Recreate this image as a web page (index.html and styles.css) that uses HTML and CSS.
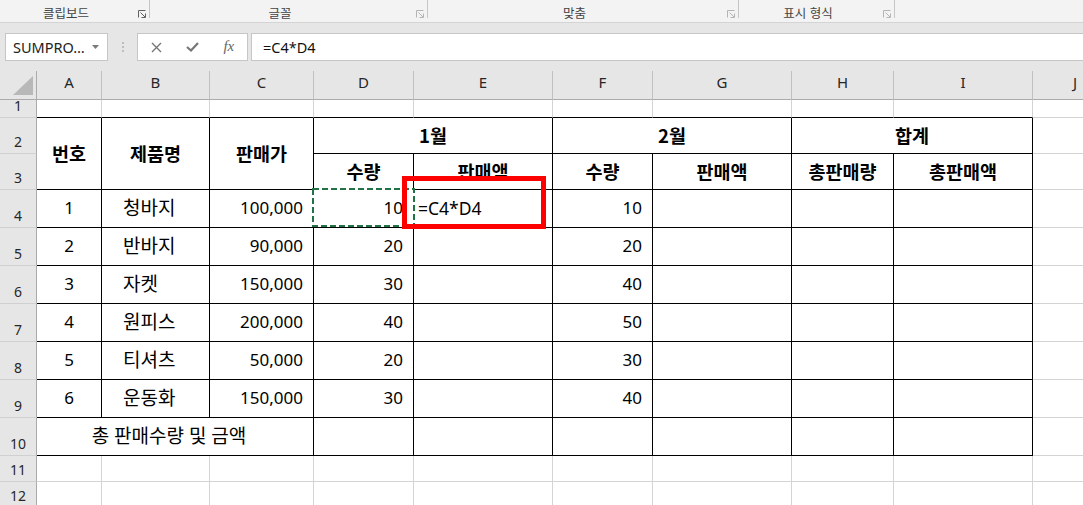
FILE: index.html
```html
<!DOCTYPE html>
<html lang="ko">
<head>
  <meta charset="UTF-8">
  <title>판매 현황</title>
  <link rel="stylesheet" href="styles.css">
</head>
<body>
  <div class="ribbon">
    <div class="group g1">
      <span class="glabel">클립보드</span>
      <svg class="launcher dark" width="8" height="8" viewBox="0 0 8 8"><path d="M0.5 7.5V0.5H7.5M2.5 2.5L7 7M3.5 7.5H7.5V3.5" fill="none" stroke="currentColor" stroke-width="1"/></svg>
      <span class="gsep"></span>
    </div>
    <div class="group g2">
      <span class="glabel">글꼴</span>
      <svg class="launcher" width="8" height="8" viewBox="0 0 8 8"><path d="M0.5 7.5V0.5H7.5M2.5 2.5L7 7M3.5 7.5H7.5V3.5" fill="none" stroke="currentColor" stroke-width="1"/></svg>
      <span class="gsep"></span>
    </div>
    <div class="group g3">
      <span class="glabel">맞춤</span>
      <svg class="launcher" width="8" height="8" viewBox="0 0 8 8"><path d="M0.5 7.5V0.5H7.5M2.5 2.5L7 7M3.5 7.5H7.5V3.5" fill="none" stroke="currentColor" stroke-width="1"/></svg>
      <span class="gsep"></span>
    </div>
    <div class="group g4">
      <span class="glabel">표시 형식</span>
      <svg class="launcher" width="8" height="8" viewBox="0 0 8 8"><path d="M0.5 7.5V0.5H7.5M2.5 2.5L7 7M3.5 7.5H7.5V3.5" fill="none" stroke="currentColor" stroke-width="1"/></svg>
      <span class="gsep"></span>
    </div>
  </div>
  <div class="band"></div>

  <div class="fbar">
    <div class="namebox">
      <span>SUMPRO…</span>
      <svg width="7" height="4" viewBox="0 0 7 4"><path d="M0 0H7L3.5 4Z" fill="#7a7a7a"/></svg>
    </div>
    <div class="dots">
      <svg width="2" height="10" viewBox="0 0 2 10"><rect x="0" y="0" width="2" height="2" fill="#bdbdbd"/><rect x="0" y="4" width="2" height="2" fill="#bdbdbd"/><rect x="0" y="8" width="2" height="2" fill="#bdbdbd"/></svg>
    </div>
    <div class="fbtns">
      <span class="fbtn"><svg width="11" height="11" viewBox="0 0 11 11"><path d="M1 1L10 10M10 1L1 10" stroke="#777" stroke-width="1.4"/></svg></span>
      <span class="fbtn"><svg width="13" height="10" viewBox="0 0 13 10"><path d="M1 5L5 8.5L12 1" fill="none" stroke="#777" stroke-width="2.2"/></svg></span>
      <span class="fbtn fx">fx</span>
    </div>
    <div class="finput">=C4*D4</div>
  </div>
  <div class="band"></div>

  <div class="sheet">
    <div class="corner"><svg width="36" height="28" viewBox="0 0 36 28"><path d="M33 5V24H13Z" fill="#b8b8b8"/></svg></div>
    <div class="ch">A</div><div class="ch">B</div><div class="ch">C</div><div class="ch">D</div><div class="ch">E</div>
    <div class="ch">F</div><div class="ch">G</div><div class="ch">H</div><div class="ch">I</div><div class="ch">J</div>

    <div class="rh">1</div>
    <div class="cell tt"></div><div class="cell tt"></div><div class="cell tt"></div><div class="cell tt"></div><div class="cell tt"></div>
    <div class="cell tt"></div><div class="cell tt"></div><div class="cell tt"></div><div class="cell tt"></div><div class="cell"></div>

    <div class="rh">2</div>
    <div class="cell t h c rows2">번호</div>
    <div class="cell t h c rows2">제품명</div>
    <div class="cell t h c rows2">판매가</div>
    <div class="cell t h c cols2">1월</div>
    <div class="cell t h c cols2">2월</div>
    <div class="cell t h c cols2">합계</div>
    <div class="cell"></div>

    <div class="rh">3</div>
    <div class="cell t h c">수량</div>
    <div class="cell t h c">판매액</div>
    <div class="cell t h c">수량</div>
    <div class="cell t h c">판매액</div>
    <div class="cell t h c">총판매량</div>
    <div class="cell t h c">총판매액</div>
    <div class="cell"></div>

    <div class="rh">4</div>
    <div class="cell t c">1</div><div class="cell t l">청바지</div><div class="cell t r">100,000</div><div class="cell t r">10</div>
    <div class="cell t f">=C4*D4</div><div class="cell t r">10</div><div class="cell t"></div><div class="cell t"></div><div class="cell t"></div><div class="cell"></div>

    <div class="rh">5</div>
    <div class="cell t c">2</div><div class="cell t l">반바지</div><div class="cell t r">90,000</div><div class="cell t r">20</div>
    <div class="cell t"></div><div class="cell t r">20</div><div class="cell t"></div><div class="cell t"></div><div class="cell t"></div><div class="cell"></div>

    <div class="rh">6</div>
    <div class="cell t c">3</div><div class="cell t l">자켓</div><div class="cell t r">150,000</div><div class="cell t r">30</div>
    <div class="cell t"></div><div class="cell t r">40</div><div class="cell t"></div><div class="cell t"></div><div class="cell t"></div><div class="cell"></div>

    <div class="rh">7</div>
    <div class="cell t c">4</div><div class="cell t l">원피스</div><div class="cell t r">200,000</div><div class="cell t r">40</div>
    <div class="cell t"></div><div class="cell t r">50</div><div class="cell t"></div><div class="cell t"></div><div class="cell t"></div><div class="cell"></div>

    <div class="rh">8</div>
    <div class="cell t c">5</div><div class="cell t l">티셔츠</div><div class="cell t r">50,000</div><div class="cell t r">20</div>
    <div class="cell t"></div><div class="cell t r">30</div><div class="cell t"></div><div class="cell t"></div><div class="cell t"></div><div class="cell"></div>

    <div class="rh">9</div>
    <div class="cell t c">6</div><div class="cell t l">운동화</div><div class="cell t r">150,000</div><div class="cell t r">30</div>
    <div class="cell t"></div><div class="cell t r">40</div><div class="cell t"></div><div class="cell t"></div><div class="cell t"></div><div class="cell"></div>

    <div class="rh">10</div>
    <div class="cell t c cols3 total">총 판매수량 및 금액</div>
    <div class="cell t"></div><div class="cell t"></div><div class="cell t"></div><div class="cell t"></div><div class="cell t"></div><div class="cell t"></div>
    <div class="cell"></div>

    <div class="rh">11</div>
    <div class="cell"></div><div class="cell"></div><div class="cell"></div><div class="cell"></div><div class="cell"></div>
    <div class="cell"></div><div class="cell"></div><div class="cell"></div><div class="cell"></div><div class="cell"></div>

    <div class="rh">12</div>
    <div class="cell"></div><div class="cell"></div><div class="cell"></div><div class="cell"></div><div class="cell"></div>
    <div class="cell"></div><div class="cell"></div><div class="cell"></div><div class="cell"></div><div class="cell"></div>

    <!-- copy marquee around D4 and the annotation box -->
    <svg class="marquee" width="103" height="40" viewBox="0 0 103 40">
      <rect x="1" y="1" width="101" height="37" fill="none" stroke="#fff" stroke-width="2"/>
      <rect x="1" y="1" width="101" height="37" fill="none" stroke="#217346" stroke-width="2" stroke-dasharray="6 3"/>
    </svg>
    <div class="redbox"></div>
  </div>
</body>
</html>
```

FILE: styles.css
```css
body {
  margin: 0;
  width: 1083px;
  height: 505px;
  overflow: hidden;
  background: #fff;
  font-family: "Noto Sans", "Noto Sans CJK KR", sans-serif;
  color: #000;
}

/* ribbon group labels */
.ribbon {
  display: flex;
  height: 22px;
  background: #f3f3f3;
  border-bottom: 1px solid #d4d4d4;
}
.group {
  display: flex;
  height: 22px;
}
.g1 { width: 150px; }
.g2 { width: 278px; }
.g3 { width: 311px; }
.g4 { width: 156px; }
.glabel {
  flex: 1;
  padding: 4px 6px 0 0;
  line-height: 18px;
  text-align: center;
  font-family: "Noto Sans CJK KR", sans-serif;
  font-size: 12.5px;
  color: #444;
  white-space: nowrap;
}
.launcher {
  margin: 10px 3px 0 0;
  color: #b4b4b4;
}
.launcher.dark {
  color: #606060;
}
.gsep {
  width: 1px;
  height: 18px;
  background: #c6c6c6;
}

.band {
  height: 10px;
  background: #e6e6e6;
}

/* formula bar */
.fbar {
  display: flex;
  height: 28px;
  background: #e6e6e6;
  padding-left: 5px;
}
.namebox {
  box-sizing: border-box;
  width: 103px;
  height: 28px;
  display: flex;
  align-items: center;
  justify-content: space-between;
  padding: 0 8px 0 7px;
  background: #fff;
  border: 1px solid #c6c6c6;
  font-size: 14.5px;
  color: #222;
}
.dots {
  width: 29px;
  display: flex;
  align-items: center;
  justify-content: center;
}
.fbtns {
  box-sizing: border-box;
  width: 111px;
  height: 28px;
  display: flex;
  background: #fff;
  border: 1px solid #c6c6c6;
}
.fbtn {
  flex: 1;
  display: flex;
  align-items: center;
  justify-content: center;
}
.fx {
  font-family: "Liberation Serif", serif;
  font-style: italic;
  font-size: 15px;
  color: #666;
  padding-bottom: 2px;
}
.finput {
  flex: 1;
  box-sizing: border-box;
  height: 28px;
  margin-left: 3px;
  padding-left: 11px;
  background: #fff;
  border: 1px solid #c6c6c6;
  border-right: none;
  line-height: 26px;
  font-size: 14.5px;
  color: #111;
}

/* worksheet */
.sheet {
  position: relative;
  display: grid;
  grid-template-columns: 37px 65px 108px 104px 100px 139px 100px 139px 102px 139px 85px;
  grid-template-rows: 29px 18px 36px 36px repeat(7, 38px) 26px 26px;
  width: 1118px;
}
.sheet > div {
  box-sizing: border-box;
}
.corner {
  background: #e6e6e6;
  border-right: 1px solid #ababab;
  border-bottom: 1px solid #ababab;
}
.corner svg {
  display: block;
}
.ch {
  display: flex;
  align-items: center;
  justify-content: center;
  padding-bottom: 5px;
  background: #e6e6e6;
  border-right: 1px solid #c0c0c0;
  border-bottom: 1px solid #ababab;
  font-size: 15px;
  line-height: 1;
  color: #262626;
}
.rh {
  display: flex;
  align-items: flex-end;
  justify-content: center;
  padding-bottom: 4px;
  background: #e6e6e6;
  border-right: 1px solid #ababab;
  border-bottom: 1px solid #d0d0d0;
  font-size: 14px;
  line-height: 1;
  color: #262626;
}
.cell {
  display: flex;
  align-items: center;
  border-right: 1px solid #d4d4d4;
  border-bottom: 1px solid #d4d4d4;
  font-size: 17px;
  line-height: 1.2;
  white-space: nowrap;
  overflow: hidden;
}
.cell.tt {
  border-bottom-color: #000;
}
.cell.t {
  border-right-color: #000;
  border-bottom-color: #000;
}
.h {
  font-family: "Noto Sans CJK KR", sans-serif;
  font-weight: 700;
  font-size: 18.5px;
}
.c { justify-content: center; }
.l { padding-left: 21px; font-size: 19px; }
.r { justify-content: flex-end; padding-right: 10px; }
.f { padding-left: 4px; font-size: 17.5px; }
.total { padding-right: 12px; font-size: 19px; }
.rows2 { grid-row: span 2; }
.cols2 { grid-column: span 2; }
.cols3 { grid-column: span 3; }

.marquee {
  position: absolute;
  left: 312px;
  top: 117px;
}
.redbox {
  position: absolute;
  left: 402px;
  top: 105px;
  width: 144px;
  height: 53px;
  box-sizing: border-box;
  border: 5px solid #ff0000;
}
```
